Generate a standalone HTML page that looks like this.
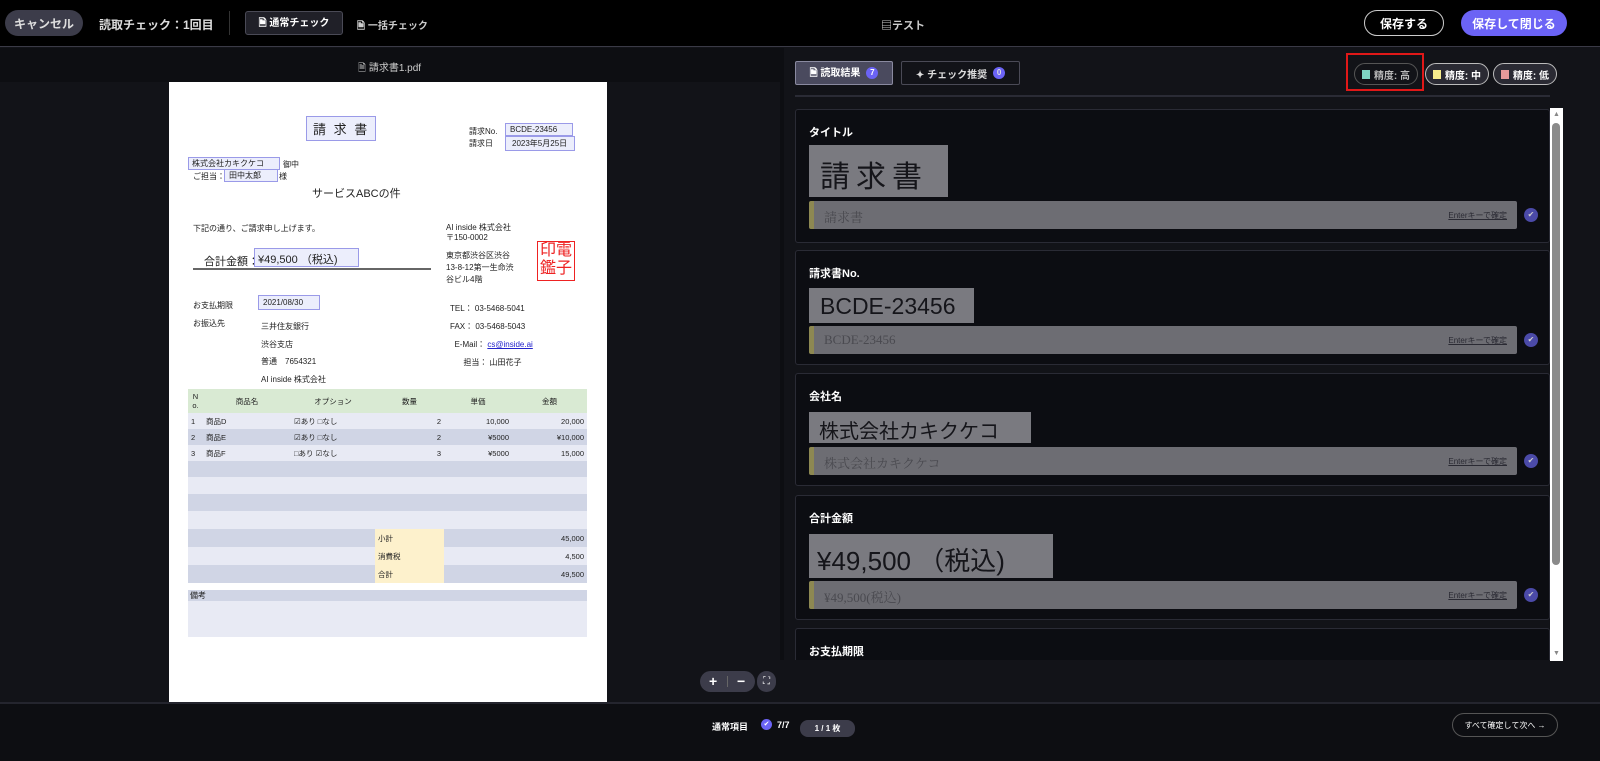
<!DOCTYPE html>
<html><head><meta charset="utf-8"><style>
*{box-sizing:border-box;margin:0;padding:0}
body{width:1600px;height:761px;overflow:hidden;background:#121318;font-family:"Liberation Sans","Noto Sans CJK JP",sans-serif;color:#fff;position:relative}
.a{position:absolute}
.hdr{left:0;top:0;width:1600px;height:47px;background:#000;border-bottom:1px solid #3a3a46}
.btn{position:absolute;display:flex;align-items:center;justify-content:center;font-size:12px;font-weight:bold}
.doc{left:169px;top:82px;width:438px;height:620px;background:#fff;color:#222;font-size:8px}
.doc .a{white-space:nowrap}
.bx{border:1px solid #9a9ae8;background:#eceefc}
.card{position:absolute;left:795px;width:755px;background:#0c0d12;border:1px solid #2a2b35;border-radius:3px}
.card .t{position:absolute;left:13px;top:14px;font-size:11px;font-weight:bold}
.img{position:absolute;left:13px;background:#7a7a80;color:#15151a;font-family:"Liberation Sans","Noto Sans CJK JP",sans-serif}
.inp{position:absolute;left:13px;width:708px;height:28px;background:#6d6d73;border-radius:2px;border-left:5px solid #8d8852;color:#4a4a50;font-family:"Liberation Serif","Noto Serif CJK SC",serif;font-size:13px;padding:6px 0 0 10px}
.inp span{position:absolute;right:10px;top:9px;font-size:8px;color:#2a2a33;text-decoration:underline;font-family:"Liberation Sans","Noto Sans CJK JP",sans-serif}
.chk{position:absolute;left:728px;width:14px;height:14px;border-radius:50%;background:#4b4aa8;color:#ccc;font-size:8px;text-align:center;line-height:14px}
table{border-collapse:collapse}
td{padding:0 3px}
</style></head><body>
<div class="a hdr"></div>
<div class="btn" style="left:5px;top:10px;width:78px;height:26px;background:#3c3c4a;border-radius:13px;color:#ddd">キャンセル</div>
<div class="a" style="left:99px;top:16px;font-size:12px;font-weight:bold;color:#ddd">読取チェック：1回目</div>
<div class="a" style="left:229px;top:11px;width:1px;height:24px;background:#333"></div>
<div class="btn" style="left:245px;top:11px;width:98px;height:24px;background:#202028;border:1px solid #4a4a56;border-radius:3px;font-size:10px">🗎 通常チェック</div>
<div class="a" style="left:357px;top:17px;font-size:10px;font-weight:bold;color:#ccc">🗎 一括チェック</div>
<div class="a" style="left:881px;top:17px;font-size:11px;font-weight:bold;color:#ccc">▤テスト</div>
<div class="btn" style="left:1364px;top:10px;width:80px;height:26px;border:1px solid #ccc;border-radius:13px;font-size:12px">保存する</div>
<div class="btn" style="left:1461px;top:10px;width:106px;height:26px;background:#6b63f5;border-radius:13px;font-size:12px">保存して閉じる</div>

<div class="a" style="left:0;top:48px;width:780px;height:34px;background:#0d0e12"></div>
<div class="a" style="left:358px;top:59px;font-size:10px;color:#ccc">🗎 請求書1.pdf</div>
<div class="a" style="left:780px;top:48px;width:820px;height:654px;background:#121318"></div>
<div class="a" style="left:780px;top:48px;width:4px;height:654px;background:#0d0e12"></div>

<div class="a doc">
 <div class="a bx" style="left:137px;top:34px;padding:2px 6px;font-size:13px;letter-spacing:2px">請 求 書</div>
 <div class="a" style="left:300px;top:44px">請求No.</div><div class="a bx" style="left:336px;top:41px;width:68px;padding:1px 4px">BCDE-23456</div>
 <div class="a" style="left:300px;top:56px">請求日</div><div class="a bx" style="left:336px;top:54px;width:70px;padding:1px 6px">2023年5月25日</div>
 <div class="a bx" style="left:19px;top:75px;width:92px;padding:0 3px">株式会社カキクケコ</div><div class="a" style="left:114px;top:77px">御中</div>
 <div class="a" style="left:24px;top:89px">ご担当：</div><div class="a bx" style="left:55px;top:87px;width:54px;padding:0 4px">田中太郎</div><div class="a" style="left:110px;top:89px">様</div>
 <div class="a" style="left:143px;top:103px;font-size:11px">サービスABCの件</div>
 <div class="a" style="left:24px;top:141px">下記の通り、ご請求申し上げます。</div>
 <div class="a" style="left:277px;top:141px;line-height:10px">AI inside 株式会社<br>〒150-0002</div>
 <div class="a" style="left:35px;top:171px;font-size:11px">合計金額：</div><div class="a bx" style="left:85px;top:166px;width:105px;height:19px;padding:2px 3px;font-size:11px">¥49,500 （税込)</div>
 <div class="a" style="left:24px;top:186px;width:238px;height:2px;background:#666"></div>
 <div class="a" style="left:277px;top:168px;line-height:12px">東京都渋谷区渋谷<br>13-8-12第一生命渋<br>谷ビル4階</div>
 <div class="a" style="left:368px;top:159px;width:38px;height:40px;border:1px solid #e22;color:#e22;font-size:16px;line-height:18px;text-align:center">印電<br>鑑子</div>
 <div class="a" style="left:24px;top:218px">お支払期限</div><div class="a bx" style="left:89px;top:213px;width:62px;padding:2px 4px">2021/08/30</div>
 <div class="a" style="left:24px;top:236px">お振込先</div>
 <div class="a" style="left:92px;top:236px;line-height:17.5px">三井住友銀行<br>渋谷支店<br>普通　7654321<br>AI inside 株式会社</div>
 <div class="a" style="left:281px;top:218px;line-height:18px">TEL： 03-5468-5041<br>FAX： 03-5468-5043<br>&nbsp;&nbsp;E-Mail： <span style="color:#22c;text-decoration:underline">cs@inside.ai</span><br>&nbsp;&nbsp;&nbsp;&nbsp;&nbsp;&nbsp;担当： 山田花子</div>
 <table class="a" style="left:19px;top:307px;width:399px;font-size:7.5px">
  <tr style="background:#d9ead3;height:24px;text-align:center"><td style="width:15px">N<br>o.</td><td style="width:88px">商品名</td><td style="width:84px">オプション</td><td style="width:69px">数量</td><td style="width:68px">単価</td><td>金額</td></tr>
  <tr style="background:#e8eaf4;height:16px"><td>1</td><td>商品D</td><td>☑あり □なし</td><td align=right>2</td><td align=right>10,000</td><td align=right>20,000</td></tr>
  <tr style="background:#d0d5e5;height:16px"><td>2</td><td>商品E</td><td>☑あり □なし</td><td align=right>2</td><td align=right>¥5000</td><td align=right>¥10,000</td></tr>
  <tr style="background:#e8eaf4;height:16px"><td>3</td><td>商品F</td><td>□あり ☑なし</td><td align=right>3</td><td align=right>¥5000</td><td align=right>15,000</td></tr>
  <tr style="background:#d0d5e5;height:16px"><td></td><td></td><td></td><td></td><td></td><td></td></tr>
  <tr style="background:#e8eaf4;height:17px"><td></td><td></td><td></td><td></td><td></td><td></td></tr>
  <tr style="background:#d0d5e5;height:17px"><td></td><td></td><td></td><td></td><td></td><td></td></tr>
  <tr style="background:#e8eaf4;height:18px"><td></td><td></td><td></td><td></td><td></td><td></td></tr>
  <tr style="background:#d0d5e5;height:18px"><td></td><td></td><td></td><td style="background:#fdf1cc">小計</td><td colspan=2 align=right>45,000</td></tr>
  <tr style="background:#e8eaf4;height:18px"><td></td><td></td><td></td><td style="background:#fdf1cc">消費税</td><td colspan=2 align=right>4,500</td></tr>
  <tr style="background:#d0d5e5;height:18px"><td></td><td></td><td></td><td style="background:#fdf1cc">合計</td><td colspan=2 align=right>49,500</td></tr>
 </table>
 <div class="a" style="left:19px;top:508px;width:399px;height:11px;background:#d0d5e5;padding-left:2px">備考</div>
 <div class="a" style="left:19px;top:519px;width:399px;height:36px;background:#e8eaf4"></div>
</div>

<div class="a" style="left:700px;top:671px;width:55px;height:21px;background:#3c3c4a;border-radius:11px;font-size:14px;font-weight:bold;line-height:21px"><span style="position:absolute;left:9px">+</span><span style="position:absolute;left:27px;top:5px;width:1px;height:11px;background:#666"></span><span style="position:absolute;left:37px">−</span></div>
<div class="a" style="left:757px;top:671px;width:19px;height:21px;background:#3c3c4a;border-radius:10px;font-size:10px;text-align:center;line-height:21px">⛶</div>

<div class="btn" style="left:795px;top:61px;width:98px;height:24px;background:#4a4a5e;border:1px solid #8a8aa0;border-radius:2px;font-size:10px">🗎 読取結果 <span style="display:inline-block;margin-left:6px;width:12px;height:12px;border-radius:50%;background:#6b63f5;font-size:8px;line-height:12px;text-align:center">7</span></div>
<div class="btn" style="left:901px;top:61px;width:119px;height:24px;border:1px solid #4a4a56;border-radius:2px;font-size:10px;color:#ddd">✦ チェック推奨 <span style="display:inline-block;margin-left:6px;width:12px;height:12px;border-radius:50%;background:#6b63f5;font-size:8px;line-height:12px;text-align:center">0</span></div>
<div class="a" style="left:1346px;top:53px;width:78px;height:38px;border:2px solid #e01818"></div>
<div class="btn" style="left:1354px;top:63px;width:64px;height:22px;border:1px solid #555;border-radius:11px;font-size:10px;color:#bbb"><span style="width:8px;height:9px;background:#7fd6c4;margin-right:4px"></span>精度: 高</div>
<div class="btn" style="left:1425px;top:63px;width:64px;height:22px;border:1px solid #bbb;background:#2a2a33;border-radius:11px;font-size:10px"><span style="width:8px;height:9px;background:#f6ec8c;margin-right:4px"></span>精度: 中</div>
<div class="btn" style="left:1493px;top:63px;width:64px;height:22px;border:1px solid #bbb;background:#2a2a33;border-radius:11px;font-size:10px"><span style="width:8px;height:9px;background:#e89a9a;margin-right:4px"></span>精度: 低</div>
<div class="a" style="left:795px;top:95px;width:755px;height:2px;background:#2a2b35"></div>

<div class="card" style="top:109px;height:134px"><div class="t">タイトル</div>
 <div class="img" style="top:35px;width:139px;height:52px;font-size:30px;padding:7px 0 0 11px;letter-spacing:6px">請求書</div>
 <div class="inp" style="top:91px">請求書<span>Enterキーで確定</span></div><div class="chk" style="top:98px">✔</div></div>
<div class="card" style="top:250px;height:115px"><div class="t">請求書No.</div>
 <div class="img" style="top:37px;width:165px;height:35px;font-size:23px;padding:5px 0 0 11px">BCDE-23456</div>
 <div class="inp" style="top:75px">BCDE-23456<span>Enterキーで確定</span></div><div class="chk" style="top:82px">✔</div></div>
<div class="card" style="top:373px;height:113px"><div class="t">会社名</div>
 <div class="img" style="top:38px;width:222px;height:31px;font-size:20px;padding:3px 0 0 10px">株式会社カキクケコ</div>
 <div class="inp" style="top:73px">株式会社カキクケコ<span>Enterキーで確定</span></div><div class="chk" style="top:80px">✔</div></div>
<div class="card" style="top:495px;height:125px"><div class="t">合計金額</div>
 <div class="img" style="top:38px;width:244px;height:44px;font-size:26px;padding:7px 0 0 8px">¥49,500 （税込)</div>
 <div class="inp" style="top:85px">¥49,500(税込)<span>Enterキーで確定</span></div><div class="chk" style="top:92px">✔</div></div>
<div class="card" style="top:628px;height:40px"><div class="t">お支払期限</div></div>
<div class="a" style="left:780px;top:660px;width:820px;height:42px;background:#121318"></div>
<div class="a" style="left:1550px;top:108px;width:13px;height:553px;background:#fff"></div>
<div class="a" style="left:1552px;top:123px;width:8px;height:442px;background:#8a8a8a;border-radius:4px"></div>
<div class="a" style="left:1553px;top:111px;font-size:7px;color:#888">▲</div>
<div class="a" style="left:1553px;top:650px;font-size:7px;color:#888">▼</div>

<div class="a" style="left:0;top:702px;width:1600px;height:59px;background:#0d0e12;border-top:2px solid #24252e"></div>
<div class="a" style="left:712px;top:720px;font-size:9px;font-weight:bold">通常項目</div>
<div class="a" style="left:761px;top:719px;width:11px;height:11px;border-radius:50%;background:#6b63f5;font-size:7px;text-align:center;line-height:11px">✔</div>
<div class="a" style="left:777px;top:720px;font-size:9px;font-weight:bold">7/7</div>
<div class="btn" style="left:800px;top:720px;width:55px;height:17px;background:#3c3c4a;border-radius:8px;font-size:8px">1 / 1 枚</div>
<div class="btn" style="left:1452px;top:713px;width:106px;height:24px;border:1px solid #555;border-radius:12px;font-size:8px;font-weight:normal">すべて確定して次へ →</div>
</body></html>
